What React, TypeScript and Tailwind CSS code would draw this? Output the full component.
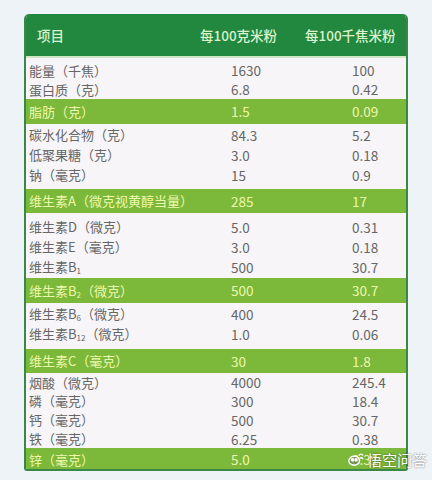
import type { ReactNode } from 'react';

type Row = { label: ReactNode; a: string; b: string };

const sub = (s: string) => <sub className="text-[8px] align-baseline relative top-[2px]">{s}</sub>;

const groups: { rows: Row[]; cls: string; rowH: string; band: Row; bandH: string }[] = [
  {
    cls: 'pt-[3px]',
    rowH: 'h-[19px]',
    rows: [
      { label: '能量（千焦）', a: '1630', b: '100' },
      { label: '蛋白质（克）', a: '6.8', b: '0.42' },
    ],
    band: { label: '脂肪（克）', a: '1.5', b: '0.09' },
    bandH: 'h-[25px]',
  },
  {
    cls: 'pt-[1px] pb-[4px]',
    rowH: 'h-[20px]',
    rows: [
      { label: '碳水化合物（克）', a: '84.3', b: '5.2' },
      { label: '低聚果糖（克）', a: '3.0', b: '0.18' },
      { label: '钠（毫克）', a: '15', b: '0.9' },
    ],
    band: { label: '维生素A（微克视黄醇当量）', a: '285', b: '17' },
    bandH: 'h-[24px]',
  },
  {
    cls: 'pt-[4px] pb-[1px]',
    rowH: 'h-[20px]',
    rows: [
      { label: '维生素D（微克）', a: '5.0', b: '0.31' },
      { label: '维生素E（毫克）', a: '3.0', b: '0.18' },
      { label: <>维生素B{sub('1')}</>, a: '500', b: '30.7' },
    ],
    band: { label: <>维生素B{sub('2')}（微克）</>, a: '500', b: '30.7' },
    bandH: 'h-[25px]',
  },
  {
    cls: 'pt-[1px] pb-[5px]',
    rowH: 'h-[20px]',
    rows: [
      { label: <>维生素B{sub('6')}（微克）</>, a: '400', b: '24.5' },
      { label: <>维生素B{sub('12')}（微克）</>, a: '1.0', b: '0.06' },
    ],
    band: { label: '维生素C（毫克）', a: '30', b: '1.8' },
    bandH: 'h-[24px]',
  },
  {
    cls: '',
    rowH: 'h-[18.75px]',
    rows: [
      { label: '烟酸（微克）', a: '4000', b: '245.4' },
      { label: '磷（毫克）', a: '300', b: '18.4' },
      { label: '钙（毫克）', a: '500', b: '30.7' },
      { label: '铁（毫克）', a: '6.25', b: '0.38' },
    ],
    band: { label: '锌（毫克）', a: '5.0', b: '0.31' },
    bandH: 'h-[23px]',
  },
];

function Line({ row, h, band }: { row: Row; h: string; band?: boolean }) {
  return (
    <div
      className={`${h} flex items-center ${band ? 'bg-[#7cb93b] text-[#eef8ad]' : 'text-[#666666]'}`}
    >
      <div className="w-[205px] pl-[3px] text-[13px] whitespace-nowrap">{row.label}</div>
      <div className="w-[121px] text-[13.5px]">{row.a}</div>
      <div className="flex-1 text-[13.5px]">{row.b}</div>
    </div>
  );
}

export default function App() {
  return (
    <div
      className="w-[432px] h-[480px] bg-[#edf3f7] pt-[14px] pl-[24px] relative overflow-hidden"
      style={{ fontFamily: '"Noto Sans CJK SC", "Noto Sans", sans-serif' }}
    >
      <div className="w-[384px] h-[457px] bg-[#f7f5f7] rounded-t-[5px] rounded-b-[3px] border-x-2 border-b-2 border-[#3b8748] overflow-hidden">
        {/* Header */}
        <div className="h-[44px] bg-[#22873f] border-b-2 border-[#cfe5c4] flex items-center text-[13.5px] text-[#d9f2cb] font-medium -mx-[2px] pt-[1px]">
          <div className="w-[176px] pl-[13px]">项目</div>
          <div className="w-[105px]">每100克米粉</div>
          <div className="flex-1">每100千焦米粉</div>
        </div>

        {groups.map((g, i) => (
          <div key={i}>
            <div className={g.cls}>
              {g.rows.map((r, j) => (
                <Line key={j} row={r} h={g.rowH} />
              ))}
            </div>
            <Line row={g.band} h={g.bandH} band />
          </div>
        ))}
      </div>

      {/* watermark */}
      <div className="absolute left-[347px] top-[451px] flex items-center gap-[2px] whitespace-nowrap text-white text-[15px] leading-none [text-shadow:0_0_2px_rgba(0,0,0,0.6)]">
        <svg width="18" height="16" viewBox="0 0 20 18" fill="none" stroke="#fff" strokeWidth="1.6">
          <ellipse cx="8" cy="11" rx="6" ry="5" fill="rgba(80,80,80,0.5)" />
          <circle cx="6" cy="10" r="1.2" fill="#fff" />
          <circle cx="10" cy="10" r="1.2" fill="#fff" />
          <path d="M13 5 q3 -3 5 0" />
          <path d="M14 8 q2 -1 4 1" />
        </svg>
        <span>悟空问答</span>
      </div>
    </div>
  );
}
